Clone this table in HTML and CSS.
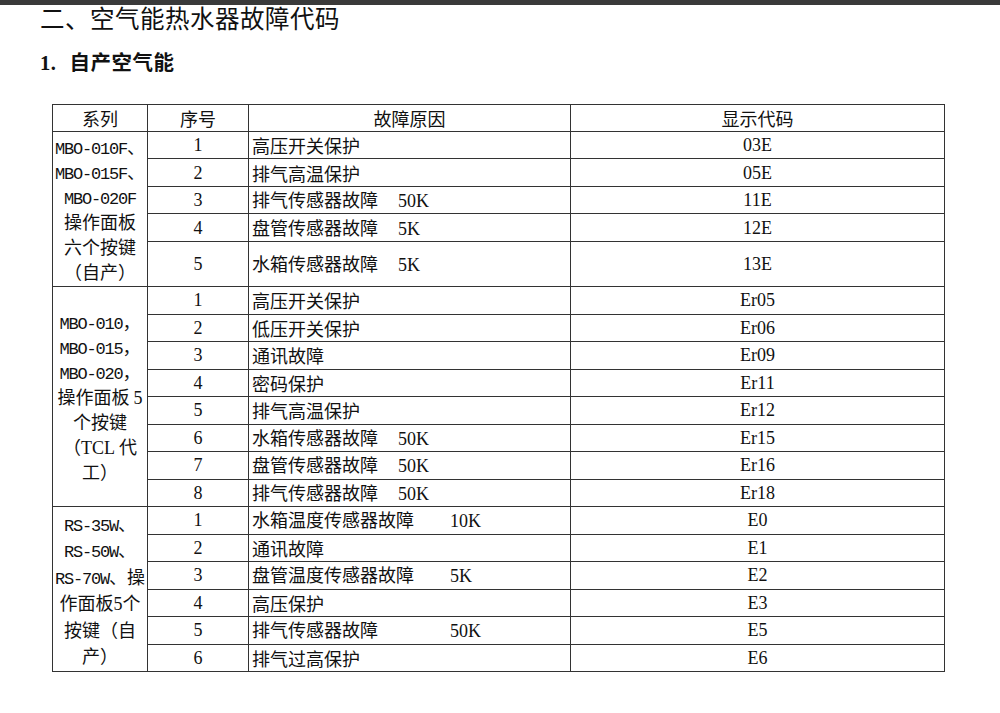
FILE: index.html
```html
<!DOCTYPE html>
<html lang="zh-CN">
<head>
<meta charset="utf-8">
<title>空气能热水器故障代码</title>
<link rel="stylesheet" href="styles.css">
</head>
<body>
<div class="topbar"></div>
<main class="page">
  <h1 class="title">二、空气能热水器故障代码</h1>
  <h2 class="subtitle"><span class="num">1.</span> 自产空气能</h2>
  <table class="codes">
    <colgroup>
      <col class="c1"><col class="c2"><col class="c3"><col class="c4">
    </colgroup>
    <thead>
      <tr class="hdr"><th>系列</th><th>序号</th><th>故障原因</th><th>显示代码</th></tr>
    </thead>
    <tbody>
      <tr class="r27">
        <td rowspan="5" class="series g1">
          <div class="ln"><span class="mono">MBO-010F</span>、</div>
          <div class="ln"><span class="mono">MBO-015F</span>、</div>
          <div class="ln"><span class="mono">MBO-020F</span></div>
          <div class="ln">操作面板</div>
          <div class="ln">六个按键</div>
          <div class="ln">（自产）</div>
        </td>
        <td class="no">1</td><td class="fault">高压开关保护</td><td class="code">03E</td></tr>
      <tr class="r28"><td class="no">2</td><td class="fault">排气高温保护</td><td class="code">05E</td></tr>
      <tr class="r27"><td class="no">3</td><td class="fault"><span class="lbl">排气传感器故障</span><span class="k">50K</span></td><td class="code">11E</td></tr>
      <tr class="r28"><td class="no">4</td><td class="fault"><span class="lbl">盘管传感器故障</span><span class="k">5K</span></td><td class="code">12E</td></tr>
      <tr class="r45"><td class="no">5</td><td class="fault"><span class="lbl">水箱传感器故障</span><span class="k">5K</span></td><td class="code">13E</td></tr>

      <tr class="r">
        <td rowspan="8" class="series g2">
          <div class="ln"><span class="mono">MBO-010</span>，</div>
          <div class="ln"><span class="mono">MBO-015</span>，</div>
          <div class="ln"><span class="mono">MBO-020</span>，</div>
          <div class="ln">操作面板 <span class="lat">5</span></div>
          <div class="ln">个按键</div>
          <div class="ln">（<span class="lat">TCL</span> 代</div>
          <div class="ln">工）</div>
        </td>
        <td class="no">1</td><td class="fault">高压开关保护</td><td class="code">Er05</td></tr>
      <tr class="r"><td class="no">2</td><td class="fault">低压开关保护</td><td class="code">Er06</td></tr>
      <tr class="r"><td class="no">3</td><td class="fault">通讯故障</td><td class="code">Er09</td></tr>
      <tr class="r"><td class="no">4</td><td class="fault">密码保护</td><td class="code">Er11</td></tr>
      <tr class="r"><td class="no">5</td><td class="fault">排气高温保护</td><td class="code">Er12</td></tr>
      <tr class="r"><td class="no">6</td><td class="fault"><span class="lbl">水箱传感器故障</span><span class="k">50K</span></td><td class="code">Er15</td></tr>
      <tr class="r"><td class="no">7</td><td class="fault"><span class="lbl">盘管传感器故障</span><span class="k">50K</span></td><td class="code">Er16</td></tr>
      <tr class="r"><td class="no">8</td><td class="fault"><span class="lbl">排气传感器故障</span><span class="k">50K</span></td><td class="code">Er18</td></tr>

      <tr class="r">
        <td rowspan="6" class="series g3">
          <div class="ln"><span class="mono">RS-35W</span>、</div>
          <div class="ln"><span class="mono">RS-50W</span>、</div>
          <div class="ln"><span class="mono">RS-70W</span>、操</div>
          <div class="ln">作面板<span class="lat">5</span>个</div>
          <div class="ln">按键（自</div>
          <div class="ln">产）</div>
        </td>
        <td class="no">1</td><td class="fault"><span class="lbl wide">水箱温度传感器故障</span><span class="k">10K</span></td><td class="code">E0</td></tr>
      <tr class="r"><td class="no">2</td><td class="fault">通讯故障</td><td class="code">E1</td></tr>
      <tr class="r"><td class="no">3</td><td class="fault"><span class="lbl wide">盘管温度传感器故障</span><span class="k">5K</span></td><td class="code">E2</td></tr>
      <tr class="r"><td class="no">4</td><td class="fault">高压保护</td><td class="code">E3</td></tr>
      <tr class="r"><td class="no">5</td><td class="fault"><span class="lbl wide">排气传感器故障</span><span class="k">50K</span></td><td class="code">E5</td></tr>
      <tr class="r"><td class="no">6</td><td class="fault">排气过高保护</td><td class="code">E6</td></tr>
    </tbody>
  </table>
</main>
</body>
</html>
```

FILE: styles.css
```css
html, body {
  margin: 0;
  padding: 0;
  background: #ffffff;
}

body {
  color: #111111;
  font-family: "Liberation Serif", "Noto Sans CJK SC", serif;
}

.topbar {
  height: 5px;
  background: #3a3a3a;
}

.page {
  padding-left: 40px;
}

.title {
  margin: 0;
  font-family: "Noto Sans CJK SC", sans-serif;
  font-size: 24.5px;
  line-height: 25px;
  font-weight: 400;
  letter-spacing: 0.5px;
  color: #111;
}

.subtitle {
  margin: 19px 0 0 0;
  font-family: "Noto Sans CJK SC", sans-serif;
  font-size: 20.5px;
  line-height: 24px;
  font-weight: 700;
  letter-spacing: 0.5px;
  color: #111;
}

.subtitle .num {
  font-family: "Liberation Serif", serif;
  font-weight: 700;
  margin-right: 8px;
}

.codes {
  margin: 29px 0 0 12px;
  border-collapse: collapse;
  table-layout: fixed;
  width: 892px;
  font-family: "Liberation Serif", "Noto Sans CJK SC", serif;
  font-size: 18px;
  color: #111;
}

.c1 { width: 95px; }
.c2 { width: 101px; }
.c3 { width: 322px; }
.c4 { width: 374px; }

.codes th,
.codes td {
  border: 1px solid #333;
  padding: 0;
  font-weight: 400;
  line-height: 20px;
}

.codes th {
  font-family: "Noto Sans CJK SC", sans-serif;
  text-align: center;
}

.hdr { height: 27px; }
.r27 { height: 27px; }
.r28 { height: 28px; }
.r45 { height: 45px; }
.r   { height: 27.5px; }

.no,
.code {
  text-align: center;
}

.fault {
  font-family: "Noto Sans CJK SC", sans-serif;
  padding-left: 3px !important;
  white-space: nowrap;
}

.lbl {
  display: inline-block;
  width: 146px;
}

.lbl.wide {
  width: 198px;
}

.k {
  font-family: "Liberation Serif", serif;
}

.series {
  font-family: "Noto Sans CJK SC", sans-serif;
  text-align: center;
  white-space: nowrap;
  vertical-align: middle;
}

.ln {
  height: 25px;
  line-height: 25px;
  overflow: visible;
}

.g3 .ln {
  height: 26.5px;
  line-height: 26.5px;
}

.mono {
  font-family: "Liberation Mono", monospace;
  font-size: 17px;
  letter-spacing: -1.2px;
  line-height: 1;
}

.lat {
  font-family: "Liberation Serif", serif;
  line-height: 1;
}
```
